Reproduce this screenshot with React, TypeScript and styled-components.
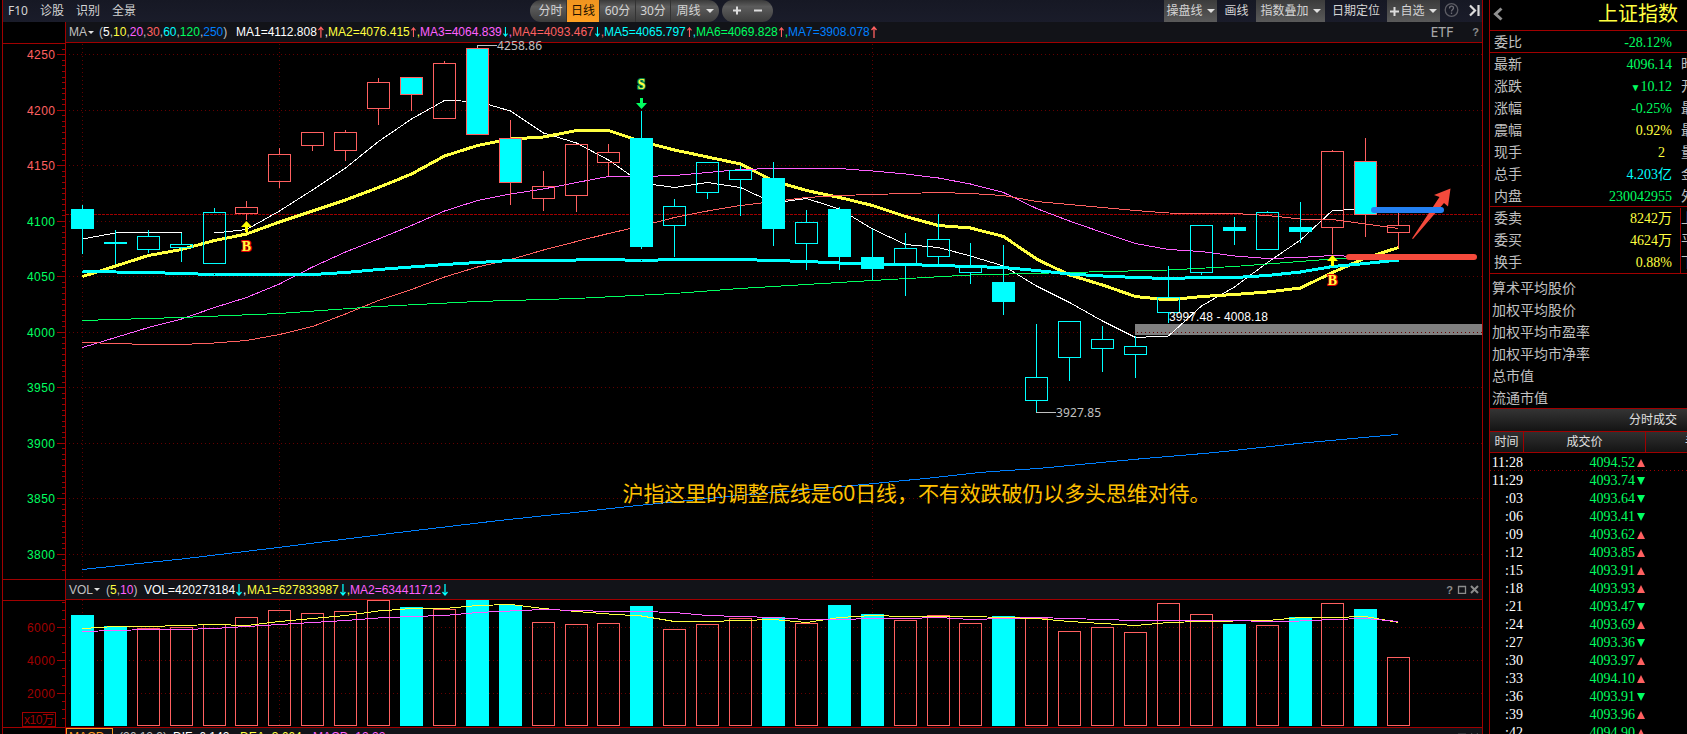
import React from 'react'
import styled, { createGlobalStyle } from 'styled-components'

const RED = '#a00000'
const UP = '#ff6060'
const CYAN = '#00ffff'
const GREEN = '#00ff60'
const YELLOW = '#ffff40'
const PINK = '#ff60ff'
const BLUE = '#0080ff'
const GREY = '#c0c0c0'

const sans = `"Liberation Sans", "Noto Sans CJK SC", sans-serif`
const ui = `"Noto Sans", "Noto Sans CJK SC", sans-serif`
const serif = `"Liberation Serif", "Noto Sans CJK SC", serif`

const GlobalStyle = createGlobalStyle`
    *{
        box-sizing:border-box;
    }
    body{
        margin:0;
        background:#000;
        overflow:hidden;
    }
`

const Page = styled.div`
    display:flex;
    width:1687px;
    height:734px;
    overflow:hidden;
    background:#000;
    color:${GREY};
    font:12px/1 ${sans};
    white-space:nowrap;
`

const Main = styled.main`
    display:flex;
    flex-direction:column;
    width:1481px;
    margin-left:2px;
    border-left:1px solid ${RED};
    border-right:1px solid ${RED};
    flex:none;
`

const Toolbar = styled.header`
    display:flex;
    align-items:center;
    flex:none;
    height:22px;
    background:linear-gradient(#161824, #1a1c2a);
    color:#d4d4d4;
    font:12px/22px ${ui};
`

const ToolLinks = styled.nav`
    display:flex;
    gap:12px;
    width:527px;
    padding-left:5px;
    a:first-child{
        width:20px;
    }
`

const Pill = styled.div`
    display:flex;
    height:22px;
    margin-right:3px;
    overflow:hidden;
    border-radius:11px;
    background:linear-gradient(#3a3a3a, #5c5c5c 30%, #3c3c3c);
`

const Period = styled.span<{ $w: number; $active?: boolean }>`
    display:flex;
    align-items:center;
    justify-content:center;
    gap:5px;
    width:${p => p.$w}px;
    border-right:1px solid #333;
    background:${p => (p.$active ? 'linear-gradient(#ef9420, #ffa022)' : 'none')};
    color:${p => (p.$active ? '#201000' : '#d4d4d4')};
    &:first-child{
        padding-left:5px;
    }
    &:last-child{
        border-right:none;
    }
`

const Tools = styled.div`
    display:flex;
    align-items:center;
    margin-left:auto;
`

const Tool = styled.span<{ $w: number; $raised?: boolean }>`
    display:flex;
    align-items:center;
    justify-content:center;
    gap:4px;
    width:${p => p.$w}px;
    height:22px;
    background:${p => (p.$raised ? 'linear-gradient(#3c3c3c, #5a5a5a)' : 'none')};
`

const PlusIcon = styled.svg`
    margin-right:-3px;
`

const Caret = styled.i<{ $small?: boolean }>`
    border:${p => (p.$small ? 3 : 4)}px solid transparent;
    border-top-color:#e0e0e0;
    border-bottom:none;
`

const Panel = styled.section`
    display:flex;
    flex:none;
    border-bottom:1px solid ${RED};
`

const Plot = styled.div`
    border-left:1px solid ${RED};
`

const Svg = styled.svg`
    display:block;
    overflow:visible;
    font:12px ${sans};
`

const IndicatorBar = styled.div<{ $h: number }>`
    display:flex;
    align-items:center;
    width:1416px;
    height:${p => p.$h}px;
    padding:0 3px;
    border-bottom:1px solid ${RED};
    background:#121318;
`

const IndicatorName = styled.span<{ $w: number }>`
    display:flex;
    align-items:center;
    gap:1px;
    width:${p => p.$w}px;
`

const Periods = styled.span<{ $w: number }>`
    width:${p => p.$w}px;
`

const Num = styled.span<{ $color: string }>`
    color:${p => p.$color};
`

const Reading = styled.span<{ $w: number; $color: string }>`
    display:flex;
    align-items:center;
    width:${p => p.$w}px;
    color:${p => p.$color};
    svg{
        margin:0 1px;
    }
`

const BarTools = styled.div`
    display:flex;
    align-items:center;
    gap:4px;
    margin-left:auto;
    color:#8c8c8c;
    font:bold 11px ${sans};
    span{
        margin-right:15px;
        color:#a8a8a8;
        font:14px/18px ${ui};
    }
`

const MacdBar = styled.div`
    display:flex;
    align-items:flex-start;
    height:6px;
    margin-left:62px;
    padding-right:3px;
    overflow:hidden;
    border-left:1px solid ${RED};
    background:#121318;
    line-height:19px;
    > *{
        height:19px;
    }
`

const MacdName = styled.span`
    width:47px;
    margin-right:6px;
    padding-left:2px;
    border:1px solid #ff9a20;
    color:#ff9a20;
    line-height:17px;
`

const Sidebar = styled.aside`
    width:198px;
    margin-left:6px;
    overflow:hidden;
    border-left:1px solid ${RED};
    flex:none;
`

const StockHead = styled.div`
    display:flex;
    align-items:center;
    justify-content:space-between;
    height:31px;
    padding:0 9px 2px 3px;
    border-bottom:1px solid ${RED};
    color:${YELLOW};
    font:20px/28px ${ui};
`

const QuoteGroup = styled.div<{ $h: number }>`
    height:${p => p.$h}px;
    padding-top:1px;
    border-bottom:1px solid ${RED};
`

const QuoteRow = styled.div<{ $color: string; $split?: boolean }>`
    display:grid;
    grid-template-columns:60px 118px 1fr;
    height:22px;
    padding-left:4px;
    font:14px/22px ${serif};
    b{
        color:${p => p.$color};
        font-weight:normal;
        text-align:right;
        white-space:pre;
    }
    small{
        font-size:10px;
    }
    em{
        margin-left:8px;
        border-left:1px solid ${p => (p.$split ? RED : 'transparent')};
        font-style:normal;
    }
`

const Averages = styled.div`
    height:134px;
    padding:3px 0 0 2px;
    font:14px/22px ${ui};
`

const TradesTitle = styled.div`
    height:24px;
    padding-left:139px;
    border:solid ${RED};
    border-width:1px 0;
    background:linear-gradient(#343434, #141414);
    color:#e0e0e0;
    font:12px/21px ${ui};
`

const TradesHead = styled.div`
    display:grid;
    grid-template-columns:34px 122px 60px;
    height:21px;
    border-bottom:1px solid ${RED};
    background:linear-gradient(#303030, #141414);
    color:#e0e0e0;
    font:12px/19px ${ui};
    text-align:center;
    span{
        border-right:1px solid ${RED};
    }
    span:last-child{
        padding-left:39px;
        text-align:left;
    }
`

const Trade = styled.div<{ $mark?: boolean }>`
    display:grid;
    grid-template-columns:33px 112px 10px;
    align-items:center;
    height:18px;
    color:#fff;
    font:14px/19px ${serif};
    text-align:right;
    background:${p => (p.$mark ? `repeating-linear-gradient(90deg, ${RED} 0 1px, #000 1px 4px) bottom/100% 1px no-repeat` : 'none')};
    b{
        color:${GREEN};
        font-weight:normal;
    }
`

const TradeArrow = styled.i<{ $up: boolean }>`
    margin:1px 0 0 2px;
    width:8px;
    height:8px;
    background:${p => (p.$up ? UP : GREEN)};
    clip-path:${p => (p.$up ? 'polygon(50% 0, 100% 100%, 0 100%)' : 'polygon(0 0, 100% 0, 50% 100%)')};
`

// centre of the n-th bar
const cx = (i: number) => 82 + 33 * i - Math.floor((i + 6) / 11)

// kind, body top, body bottom, wick top, wick bottom
// F = filled, X = filled with red outline, C = hollow cyan, R = hollow red
type Candle = [string, number, number, number, number]

const candles: Candle[] = [
    ['F', 209, 229, 205, 254], ['F', 242, 244, 230, 264], ['C', 236, 250, 230, 253], ['C', 244, 248, 233, 262],
    ['C', 212, 264, 208, 264], ['R', 207, 214, 201, 220], ['R', 154, 182, 148, 188], ['R', 132, 146, 132, 151],
    ['R', 132, 151, 130, 161], ['R', 82, 109, 78, 125], ['X', 77, 95, 77, 111], ['R', 63, 119, 61, 119],
    ['X', 48, 135, 48, 135], ['X', 138, 183, 120, 205], ['R', 186, 199, 171, 211], ['R', 144, 196, 144, 212],
    ['R', 152, 163, 144, 176], ['F', 138, 247, 111, 249], ['C', 206, 226, 199, 257], ['C', 162, 193, 162, 199],
    ['C', 170, 180, 166, 216], ['F', 178, 229, 162, 246], ['C', 222, 244, 210, 270], ['F', 209, 257, 207, 270],
    ['F', 257, 269, 229, 280], ['C', 248, 265, 233, 296], ['C', 239, 257, 214, 264], ['C', 267, 273, 243, 284],
    ['F', 282, 302, 245, 315], ['C', 377, 401, 324, 412], ['C', 321, 358, 321, 381], ['C', 339, 349, 326, 372],
    ['C', 346, 355, 336, 378], ['C', 297, 313, 266, 323], ['C', 225, 273, 225, 275], ['F', 227, 231, 217, 245],
    ['C', 212, 250, 211, 250], ['F', 227, 232, 202, 243], ['R', 151, 228, 150, 254], ['X', 161, 215, 138, 237],
    ['R', 225, 233, 212, 248],
]

const volumes = [
    615, 626, 628, 627, 624, 617, 610, 613, 611, 600, 607, 609, 600, 605, 622, 624, 623, 606, 629, 624, 618,
    617, 623, 605, 614, 620, 615, 623, 616, 618, 631, 627, 632, 603, 614, 624, 625, 617, 603, 609, 657,
]
const filledVolumes = [0, 1, 10, 12, 13, 17, 21, 23, 24, 28, 35, 37, 39]

const ma1 = [239, 233, 232.5, 233, 233, 229.5, 211, 190, 168, 141.5, 119, 100.5, 101.5, 111, 133, 143, 160, 183, 187.5, 182.5, 187.5, 203, 198.5, 209, 229, 244.5, 247.5, 256, 266, 286, 302.5, 321, 337.5, 336, 306, 287, 262.5, 240, 210.5, 209]
const ma2 = [276.5, 266, 255.5, 249.5, 240.5, 234, 222, 211, 200, 187.5, 174, 156, 145.5, 139, 137, 130.5, 130.5, 141.5, 150, 157, 164, 181, 190.5, 197.5, 205.5, 216.5, 225.5, 228, 236.5, 259, 275, 285, 296.5, 300, 296.5, 294.5, 292, 288, 272.5, 258, 247.5]
const ma3 = [347.5, 337.5, 327.5, 319, 307.5, 297.5, 284, 267, 252, 239, 225.5, 211, 200.5, 194, 189, 182.5, 176.5, 176.5, 175.5, 172.5, 169.5, 168.5, 168.5, 168.5, 171, 174, 178, 184, 192.5, 208.5, 221, 232.5, 243.5, 249.5, 251.5, 256, 258.5, 257.5, 255.5, 257]
const ma4 = [342.5, 343.5, 344.5, 344.5, 343, 340.5, 334.5, 326.5, 314, 300.5, 289.5, 277, 267, 259.5, 250, 241.5, 233.5, 226, 217.5, 211, 205.5, 201.5, 197.5, 195.5, 194.5, 193.5, 192.5, 193.5, 195.5, 201.5, 204.5, 207.5, 210.5, 213, 213.5, 213.5, 215.5, 219, 219.5, 224, 228.5]
const ma5 = [271.5, 272, 272.5, 273.5, 274.5, 274.5, 274.5, 274.5, 272.5, 269.5, 267, 264.5, 262.5, 260.5, 260.5, 260, 259.5, 260.5, 259.5, 259.5, 259.5, 260.5, 261.5, 263, 264.5, 264.5, 265.5, 266.5, 267.5, 270.5, 274, 276, 277.5, 278.5, 277.5, 277.5, 275.5, 272, 266.5, 263.5, 260]
const volMa1 = [628.5, 626.5, 626.5, 625.5, 624.5, 625.5, 621.5, 618.5, 615.5, 611, 608.5, 608.5, 605.5, 604.5, 608.5, 611.5, 614, 616, 621.5, 621.5, 620.5, 619.5, 622.5, 617.5, 615.5, 616.5, 616.5, 616.5, 617.5, 618.5, 621.5, 623.5, 625.5, 622.5, 621.5, 621, 620.5, 617.5, 617.5, 616.5, 622.5]
const volMa2 = [631.5, 630.5, 629.5, 629.5, 628.5, 626.5, 624.5, 622.5, 620.5, 618, 616.5, 615.5, 612.5, 611, 609.5, 610.5, 611.5, 611.5, 612.5, 615.5, 616.5, 617.5, 619.5, 619.5, 618.5, 618.5, 617.5, 619.5, 618.5, 617.5, 618.5, 619.5, 620.5, 620.5, 620.5, 620.5, 621.5, 621, 619.5, 618.5, 621.5]

const ma6Points = '82,320.5 181,317.5 279,313.5 378,306.5 477,301.5 576,298.5 674,293.5 740,288.5 806,284.5 872,280.5 970,275 1069,272.5 1168,270 1234,266.5 1300,261.5 1332,259 1365,257'
const ma7Points = '82,569.5 182,559 280,547.3 380,534.7 500,520.4 567,513.3 633,506 670,502.3 733,496 800,490.3 872,483.7 933,477.7 980,472.4 1040,468.3 1135,459.3 1213,452.7 1300,443.3 1398,434.4'

const priceTicks = [4250, 4200, 4150, 4100, 4050, 4000, 3950, 3900, 3850, 3800]
const priceY = (v: number) => Math.round(54.3 + (4250 - v) * 1.11)
const gridX = [82, 279, 872]

const maPeriods = [['5', '#ffffff'], ['10', YELLOW], ['20', PINK], ['30', UP], ['60', CYAN], ['120', GREEN], ['250', BLUE]]

const readings = [
    ['MA1=4112.808', '#ffffff', 1], ['MA2=4076.415', YELLOW, 1], ['MA3=4064.839', PINK, 0], ['MA4=4093.467', UP, 0],
    ['MA5=4065.797', CYAN, 1], ['MA6=4069.828', GREEN, 1], ['MA7=3908.078', BLUE, 1],
] as const

const quotes = [
    ['最新', '4096.14', GREEN, '昨'], ['涨跌', '▼10.12', GREEN, '开'], ['涨幅', '-0.25%', GREEN, '最'], ['震幅', '0.92%', YELLOW, '最'],
    ['现手', '2  ', YELLOW, '量'], ['总手', '4.203亿', CYAN, '金'], ['内盘', '230042955', GREEN, '外'],
]
const orders = [
    ['委卖', '8242万', YELLOW, '上'], ['委买', '4624万', YELLOW, '平'], ['换手', '0.88%', YELLOW, '下'],
]

const trades: [string, string, boolean][] = [
    ['11:28', '4094.52', true], ['11:29', '4093.74', false], [':03', '4093.64', false], [':06', '4093.41', false],
    [':09', '4093.62', true], [':12', '4093.85', true], [':15', '4093.91', true], [':18', '4093.93', true],
    [':21', '4093.47', false], [':24', '4093.69', true], [':27', '4093.36', false], [':30', '4093.97', true],
    [':33', '4094.10', true], [':36', '4093.91', false], [':39', '4093.96', true], [':42', '4094.90', true],
]

const Line = ({ ys, color, w = 1 }: { ys: number[]; color: string; w?: number }) => (
    <polyline points={ys.map((y, i) => `${cx(i) + 0.5},${y}`).join(' ')} fill="none" stroke={color} strokeWidth={w} shapeRendering="crispEdges" />
)

const Grid = ({ ys, top, bottom }: { ys: number[]; top: number; bottom: number }) => (
    <g stroke="#640000" strokeDasharray="1 3" shapeRendering="crispEdges">
        {ys.map(y => <line key={y} x1="69" x2="1482" y1={y + 0.5} y2={y + 0.5} />)}
        {gridX.map(x => <line key={x} x1={x + 0.5} x2={x + 0.5} y1={top} y2={bottom} />)}
    </g>
)

const CandleMark = ({ i, c: [kind, top, bottom, high, low] }: { i: number; c: Candle }) => {
    const color = kind === 'R' || kind === 'X' ? UP : CYAN
    const fill = kind === 'F' || kind === 'X' ? CYAN : 'none'
    const x = cx(i)
    return (
        <g stroke={color} shapeRendering="crispEdges">
            {high < top && <line x1={x + 0.5} x2={x + 0.5} y1={high} y2={top} />}
            {low > bottom && <line x1={x + 0.5} x2={x + 0.5} y1={bottom} y2={low} />}
            <rect x={x - 10.5} y={top + 0.5} width="22" height={bottom - top - 1} fill={fill} />
        </g>
    )
}

const Signal = ({ x, y, letter, color }: { x: number; y: number; letter: string; color: string }) => (
    <text x={x} y={y} textAnchor="middle" fontFamily="Liberation Serif, serif" fontWeight="bold" fontSize="14" fill={YELLOW} stroke={color} strokeWidth="2" paintOrder="stroke">{letter}</text>
)

const Trend = ({ up }: { up: number | boolean }) => (
    <svg width="6" height="12" viewBox="0 0 6 12" fill="none" stroke={up ? UP : CYAN} strokeWidth="1.3">
        {up ? <path d="M3 12V1M.5 4L3 1l2.500 3" /> : <path d="M3 0v11M.5 8L3 11l2.500-3" />}
    </svg>
)

const WindowIcons = () => (
    <svg width="22" height="9" viewBox="0 0 22 9" fill="none" stroke="#8c8c8c">
        <path d="M1 1.500h8M1.500 1v7.500h7V1" strokeWidth="1.300" />
        <path d="M14 1l7 7M21 1l-7 7" strokeWidth="2" />
    </svg>
)

const PriceAxis = () => {
    const minor = Array.from({ length: 95 }, (_, i) => 4255 - i * 5)
    return (
        <Svg width="62" height="557" viewBox="3 22 62 557">
            <g stroke={RED} shapeRendering="crispEdges">
                <line x1="3" x2="65" y1="43.5" y2="43.5" />
                {minor.map(v => <line key={v} x1={v % 50 ? 62 : 57} x2="65" y1={priceY(v) + 0.5} y2={priceY(v) + 0.5} />)}
            </g>
            {priceTicks.map(v => (
                <text key={v} x="55" y={priceY(v) + 5} textAnchor="end" textLength="28" fill={v > 4100 ? UP : GREEN}>{v}</text>
            ))}
        </Svg>
    )
}

const VolumeAxis = () => (
    <Svg width="62" height="147" viewBox="3 580 62 147">
        <g stroke={RED} fill="none" shapeRendering="crispEdges">
            <line x1="3" x2="65" y1="600.5" y2="600.5" />
            {Array.from({ length: 15 }, (_, i) => {
                const y = Math.round(602.2 + i * 8.25) + 0.5
                return <line key={i} x1={i % 4 === 3 ? 57 : 62} x2="65" y1={y} y2={y} />
            })}
            <rect x="22.5" y="712.5" width="33" height="14" />
        </g>
        <g fill={RED} textAnchor="end">
            <text x="55" y="632" textLength="28">6000</text>
            <text x="55" y="665" textLength="28">4000</text>
            <text x="55" y="698" textLength="28">2000</text>
            <text x="54" y="724" textLength="30">x10万</text>
        </g>
    </Svg>
)

const PriceChart = () => (
    <Svg width="1416" height="536" viewBox="66 43 1416 536">
        <rect x="1135" y="324" width="347" height="11" fill="#808080" />
        <Grid ys={priceTicks.map(priceY)} top={44} bottom={579} />
        <line x1="66" x2="1482" y1="214.5" y2="214.5" stroke="#a00000" strokeDasharray="3 1" shapeRendering="crispEdges" />
        <Line ys={ma1} color="#fff" />
        <Line ys={ma2} color={YELLOW} w={3} />
        <Line ys={ma3} color={PINK} />
        <Line ys={ma4} color={UP} />
        <g fill="none" shapeRendering="crispEdges">
            <polyline points={ma6Points} stroke={GREEN} />
            <polyline points={ma7Points} stroke={BLUE} />
        </g>
        <Line ys={ma5} color={CYAN} w={3} />
        {candles.map((c, i) => <CandleMark key={i} i={i} c={c} />)}
        <g stroke={GREY} fill="none" shapeRendering="crispEdges">
            <path d="M477.500 48V45.500H497" />
            <path d="M1036 412.500H1056" />
        </g>
        <g fill={GREY} fontFamily="Noto Sans, sans-serif">
            <text x="497" y="49.500" textLength="45">4258.86</text>
            <text x="1056" y="416.500" textLength="45">3927.85</text>
        </g>
        <text x="1169" y="321" textLength="99" fill="#fff">3997.48 - 4008.18</text>
        <Signal x={641.5} y={89} letter="S" color="#008850" />
        <Signal x={246.5} y={251} letter="B" color="#e00000" />
        <Signal x={1332.5} y={285} letter="B" color="#e00000" />
        <path d="M640 98h3v5h4l-5.500 6-5.500-6h4z" fill={GREEN} />
        <path d="M246.500 221l5.500 6h-4v5h-3v-5h-4z" fill="#ffff00" />
        <path d="M1332.500 255l5.500 6h-4v5h-3v-5h-4z" fill="#ffff00" />
        <text x="622.5" y="501" textLength="588" fill="#ffc000" fontSize="21" fontFamily="Noto Sans, Noto Sans CJK SC, sans-serif">沪指这里的调整底线是60日线，不有效跌破仍以多头思维对待。</text>
        <path d="M1450.500 188.500L1434 195l5.500 2L1412 238.500l1 .500 31-36 4 3.500z" fill="#f44a3c" />
        <g strokeWidth="6" strokeLinecap="round">
            <line x1="1374" x2="1441" y1="210" y2="210" stroke="#2380f2" />
            <line x1="1349" x2="1474" y1="257" y2="257" stroke="#f44a3c" />
        </g>
    </Svg>
)

const VolumeChart = () => (
    <Svg width="1416" height="127" viewBox="66 600 1416 127">
        <Grid ys={[627, 660, 693]} top={600} bottom={727} />
        <g shapeRendering="crispEdges">
            {volumes.map((y, i) => {
                const solid = filledVolumes.includes(i)
                return <rect key={i} x={cx(i) - 10.5} y={y + 0.5} width="22" height={725 - y} fill={solid ? CYAN : 'none'} stroke={solid ? CYAN : UP} />
            })}
        </g>
        <Line ys={volMa1} color={YELLOW} />
        <Line ys={volMa2} color={PINK} />
    </Svg>
)

const App = () => {
    return (
        <>
            <GlobalStyle />
            <Page>
                <Main>
                    <Toolbar>
                        <ToolLinks>
                            <a>F10</a>
                            <a>诊股</a>
                            <a>识别</a>
                            <a>全景</a>
                        </ToolLinks>
                        <Pill>
                            <Period $w={37}>分时</Period>
                            <Period $w={33} $active>日线</Period>
                            <Period $w={36}>60分</Period>
                            <Period $w={35}>30分</Period>
                            <Period $w={48}>周线 <Caret /></Period>
                        </Pill>
                        <Pill>
                            <svg width="51" height="22" viewBox="0 0 51 22" stroke="#dcdcdc" strokeWidth="2">
                                <path d="M11 10.500h8M15 6.500v8M32 10.500h8" />
                            </svg>
                        </Pill>
                        <Tools>
                            <Tool $w={53} $raised>操盘线<Caret /></Tool>
                            <Tool $w={39}>画线</Tool>
                            <Tool $w={69} $raised>指数叠加<Caret /></Tool>
                            <Tool $w={62}>日期定位</Tool>
                            <Tool $w={53} $raised>
                                <PlusIcon width="9" height="9" viewBox="0 0 9 9" stroke="#dcdcdc" strokeWidth="2"><path d="M0 4.500h9M4.500 0v9" /></PlusIcon>
                                自选<Caret />
                            </Tool>
                            <svg width="42" height="22" viewBox="0 0 42 22" fill="none">
                                <circle cx="11.500" cy="10" r="6.300" stroke="#5c5c64" strokeWidth="1.300" />
                                <path d="M9.500 8.500c0-3 4-3 4-.500 0 1.500-2 1.500-2 3.500M11.500 12.500v1.500" stroke="#6c6c74" strokeWidth="1.300" />
                                <path d="M30 5.500l5 5-5 5M38.500 5v11" stroke="#dcdcdc" strokeWidth="2.200" />
                            </svg>
                        </Tools>
                    </Toolbar>
                    <Panel>
                        <PriceAxis />
                        <Plot>
                            <IndicatorBar $h={21}>
                                <IndicatorName $w={30}>MA<Caret $small /></IndicatorName>
                                <Periods $w={137}>
                                    ({maPeriods.map(([n, color], i) => (
                                        <React.Fragment key={n}>{i > 0 && ','}<Num $color={color}>{n}</Num></React.Fragment>
                                    ))})
                                </Periods>
                                {readings.map(([text, color, up], i) => (
                                    <Reading key={text} $w={92} $color={color}>{text}<Trend up={up} />{i < 6 && ','}</Reading>
                                ))}
                                <BarTools><span>ETF</span>?</BarTools>
                            </IndicatorBar>
                            <PriceChart />
                        </Plot>
                    </Panel>
                    <Panel>
                        <VolumeAxis />
                        <Plot>
                            <IndicatorBar $h={20}>
                                <IndicatorName $w={37}>VOL<Caret $small /></IndicatorName>
                                <Periods $w={38}>
                                    (<Num $color={YELLOW}>5</Num>,<Num $color={PINK}>10</Num>)
                                </Periods>
                                <Reading $w={103} $color="#fff">VOL=420273184<Trend up={0} />,</Reading>
                                <Reading $w={103} $color={YELLOW}>MA1=627833987<Trend up={0} />,</Reading>
                                <Reading $w={103} $color={PINK}>MA2=634411712<Trend up={0} /></Reading>
                                <BarTools>?<WindowIcons /></BarTools>
                            </IndicatorBar>
                            <VolumeChart />
                        </Plot>
                    </Panel>
                    <MacdBar>
                        <MacdName>MACD</MacdName>
                        <Periods $w={54}>(26,12,9)</Periods>
                        <Reading $w={67} $color="#fff">DIF=6.142</Reading>
                        <Reading $w={73} $color={YELLOW}>DEA=3.664</Reading>
                        <Reading $w={90} $color={PINK}>MACD=12.22</Reading>
                        <BarTools>?<WindowIcons /></BarTools>
                    </MacdBar>
                </Main>
                <Sidebar>
                    <StockHead>
                        <svg width="10" height="14" viewBox="0 0 10 14" fill="none" stroke="#909090" strokeWidth="3"><path d="M8.500 1.500L2.500 7l6 5.500" /></svg>
                        上证指数
                    </StockHead>
                    <QuoteGroup $h={22}>
                        <QuoteRow $color={GREEN}>委比<b>-28.12%</b></QuoteRow>
                    </QuoteGroup>
                    <QuoteGroup $h={154}>
                        {quotes.map(([name, value, color, next]) => (
                            <QuoteRow key={name} $color={color}>
                                {name}
                                <b>{value[0] === '▼' ? <><small>▼</small>{value.slice(1)}</> : value}</b>
                                <em>{next}</em>
                            </QuoteRow>
                        ))}
                    </QuoteGroup>
                    <QuoteGroup $h={67}>
                        {orders.map(([name, value, color, next]) => (
                            <QuoteRow key={name} $color={color} $split>{name}<b>{value}</b><em>{next}</em></QuoteRow>
                        ))}
                    </QuoteGroup>
                    <Averages>
                        <div>算术平均股价</div>
                        <div>加权平均股价</div>
                        <div>加权平均市盈率</div>
                        <div>加权平均市净率</div>
                        <div>总市值</div>
                        <div>流通市值</div>
                    </Averages>
                    <TradesTitle>分时成交</TradesTitle>
                    <TradesHead>
                        <span>时间</span>
                        <span>成交价</span>
                        <span>手</span>
                    </TradesHead>
                    {trades.map(([time, price, up], i) => (
                        <Trade key={time} $mark={i === 0}>
                            {time}<b>{price}</b><TradeArrow $up={up} />
                        </Trade>
                    ))}
                </Sidebar>
            </Page>
        </>
    )
}

export default App
